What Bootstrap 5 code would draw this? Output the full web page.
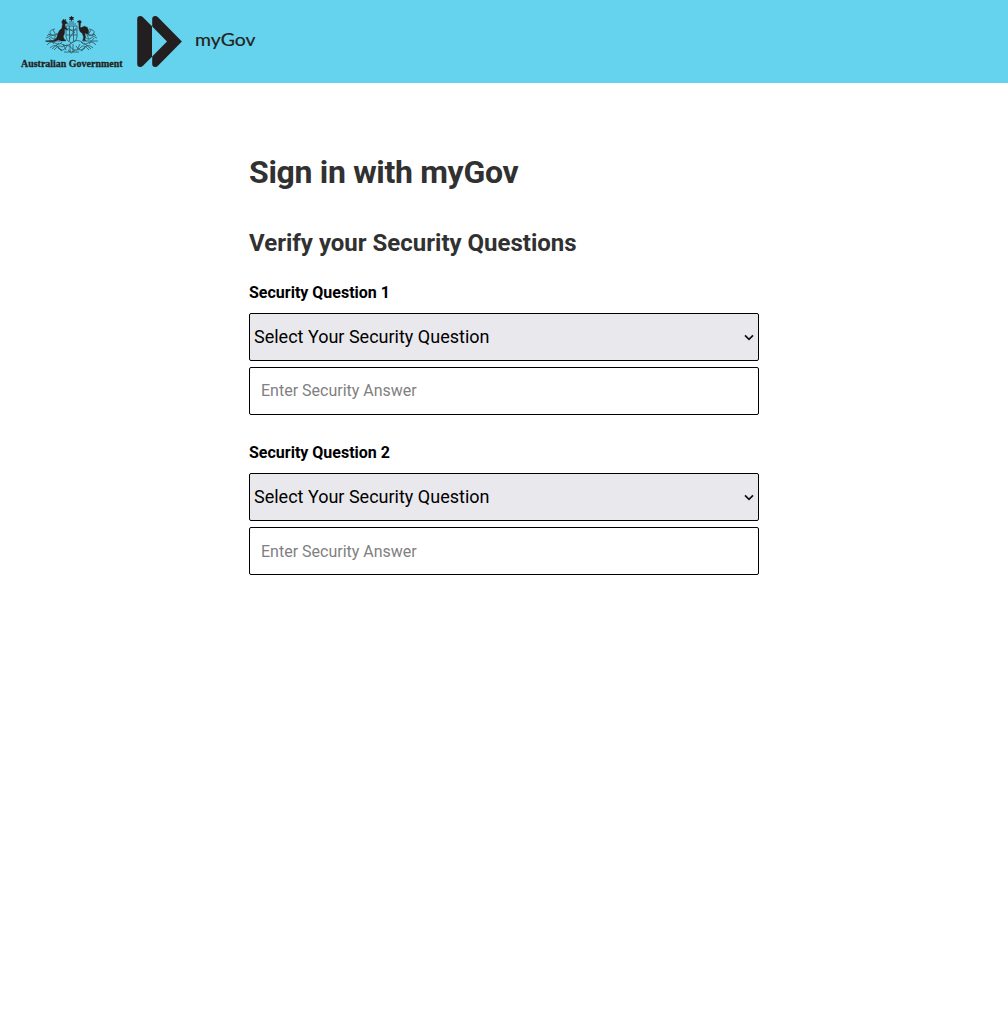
<!DOCTYPE html>
<html lang="en">
<head>
<meta charset="utf-8">
<meta name="viewport" content="width=device-width, initial-scale=1">
<title>Security questions</title>
<link href="https://cdn.jsdelivr.net/npm/bootstrap@5.3.0/dist/css/bootstrap.min.css" rel="stylesheet">
<style>
body{font-family:Roboto,sans-serif;color:#000;background:#fff}
.top-bar{height:83px;background:#66d3ee}
.page-col{width:510px;padding-top:69px}
h1{font-size:32px;font-weight:700;line-height:40px;color:#313131;margin-bottom:35px;letter-spacing:-.32px}
h2{font-size:24px;font-weight:700;line-height:32px;color:#313131;margin-bottom:22px}
.q-label{font-size:16px;font-weight:700;line-height:24px;margin-bottom:8px}
.q-select,.q-answer{height:48px;border:1px solid #000;border-radius:2px;color:#000}
.q-select{appearance:none;background:#e9e8ed;font-size:18px;padding:0 4px 1px}
.q-pick{margin-bottom:6px}
.q-arrow{right:5px;top:20px;pointer-events:none}
.q-answer{background:#fff;font-size:16px;padding:0 11px 2px}
.q-answer::placeholder{color:#808080}
.q-answer.q-low{padding-bottom:0}
.q-group{margin-bottom:26px}
</style>
</head>
<body>
<header class="top-bar d-flex">
<svg width="270" height="83" viewBox="0 0 270 83" role="img" aria-label="Australian Government myGov">
 <!-- crest foliage and shield -->
 <g fill="none" stroke="#1d3138" stroke-width=".85" opacity=".75">
  <path d="M46 38q4-3 6 0t6-1M45 41h15M47 45q4-5 8-2t7-1M50 48q5-5 9 0t8-2M48 34q3 3 7 1M54 50q5-6 8-3M49 38l5 6M57 33l-3 6M59 43l-7 6M55 29q-6 1-5 4t5 2M53 30l3 5M56 45l6 6M47 36q2-3 4-1M63 44l3 6M58 48l4 3"/>
  <path d="M97 38q-4-3-6 0t-6-1M98 41h-15M96 45q-4-5-8-2t-7-1M93 48q-5-5-9 0t-8-2M95 34q-3 3-7 1M89 50q-5-6-8-3M94 38l-5 6M86 33l3 6M84 43l7 6M89 29q6 1 5 4t-5 2M91 30l-3 5M87 45l-6 6M96 36q-2-3-4-1M80 44l-3 6M85 48l-4 3"/>
  <path d="M66 26h11v11q0 4-5.500 6q-5.500-2-5.500-6zM66 30h11M66 35h11M69.500 26v15M73.500 26v15M68 28l7 5M76 28l-7 11M67 24h9M69 22h5"/>
  <path d="M60 43q6 5 11.500 0t12 0M62 47q5-4 9.500 1t9.500-1M64 52h15M68 50l3.500 3 3.500-3M70 44v8M73 44v8"/>
 </g>
 <path fill="#231f20" d="m71.500 15.800.8 1.300 1.700-.2-.9 1.500.9 1.500-1.700-.1-.8 1.600-.8-1.600-1.700.1.900-1.500-.9-1.500 1.700.2z"/>
 <path fill="#231f20" stroke="#231f20" stroke-width=".4" d="M63.600 19l1 1.600 1-1.500.2 2.100 1.700 1.600-.5.800-2 .4.200 3.200 2.500 1.700-.4.800-2.600-.8-.2 4.600-1.200 3.100.8 2.400 1.500 1.100v.9h-4.700l-2.300-1.300-4.100 1.800-8 .1v-.7l7-.5 3.200-2.300 1.100-4.500 2-3.500 2-1.600.7-4.200-.8-2.500z"/>
 <path fill="#231f20" stroke="#231f20" stroke-width=".4" d="M77 22.100l1.900-1.500 1.700.1.800 1.200-.9 1.500-.3 3.400.8 1 3.200-1.500 3 1 1.600 3.600-.6 3.400-1.700-.8-1.800-.3.800 3.300-.6 3 1.200 1h-3.700l.9-1.500.2-2.200-1.200-3.300-2.300-2-1-2.700-.2-5.900-.1-.7z"/>
 <text x="21" y="67" textLength="101.500" lengthAdjust="spacingAndGlyphs" font-family="Liberation Serif,serif" font-weight="700" font-size="10.500" fill="#231f20" stroke="#231f20" stroke-width=".3">Australian Government</text>
 <!-- double arrow -->
 <path fill="#231f20" d="M137.200 19q0-3 3-3 1.600 0 2.800 1.200L152 26.200V56.800l-9 9q-1.200 1.200-2.800 1.200-3 0-3-3z"/>
 <path fill="#231f20" d="M152.200 19q0-3 3-3 1.600 0 2.800 1.200l23.900 24.300L158 65.800q-1.200 1.200-2.800 1.200-3 0-3-3V56.600L167 41.500 152.200 26.400z"/>
 <text x="195" y="45.700" textLength="60.500" lengthAdjust="spacingAndGlyphs" font-family="Lato,sans-serif" font-size="18" fill="#231f20" stroke="#231f20" stroke-width=".2">myGov</text>
</svg>
</header>
<main class="page-col mx-auto">
 <h1>Sign in with myGov</h1>
 <h2>Verify your Security Questions</h2>
 <section class="q-group">
  <label class="q-label d-block" for="s1">Security Question 1</label>
  <div class="q-pick position-relative">
   <select class="q-select d-block w-100" id="s1"><option>Select Your Security Question</option></select>
   <svg class="q-arrow position-absolute" width="10" height="8" viewBox="0 0 10 8" fill="none" stroke="#111" stroke-width="1.700"><path d="M1 2.300l4 4 4-4"/></svg>
  </div>
  <input class="q-answer d-block w-100" type="text" placeholder="Enter Security Answer" aria-label="Answer 1">
 </section>
 <section class="q-group">
  <label class="q-label d-block" for="s2">Security Question 2</label>
  <div class="q-pick position-relative">
   <select class="q-select d-block w-100" id="s2"><option>Select Your Security Question</option></select>
   <svg class="q-arrow position-absolute" width="10" height="8" viewBox="0 0 10 8" fill="none" stroke="#111" stroke-width="1.700"><path d="M1 2.300l4 4 4-4"/></svg>
  </div>
  <input class="q-answer q-low d-block w-100" type="text" placeholder="Enter Security Answer" aria-label="Answer 2">
 </section>
</main>
<script src="https://cdn.jsdelivr.net/npm/bootstrap@5.3.0/dist/js/bootstrap.bundle.min.js"></script>
</body>
</html>
